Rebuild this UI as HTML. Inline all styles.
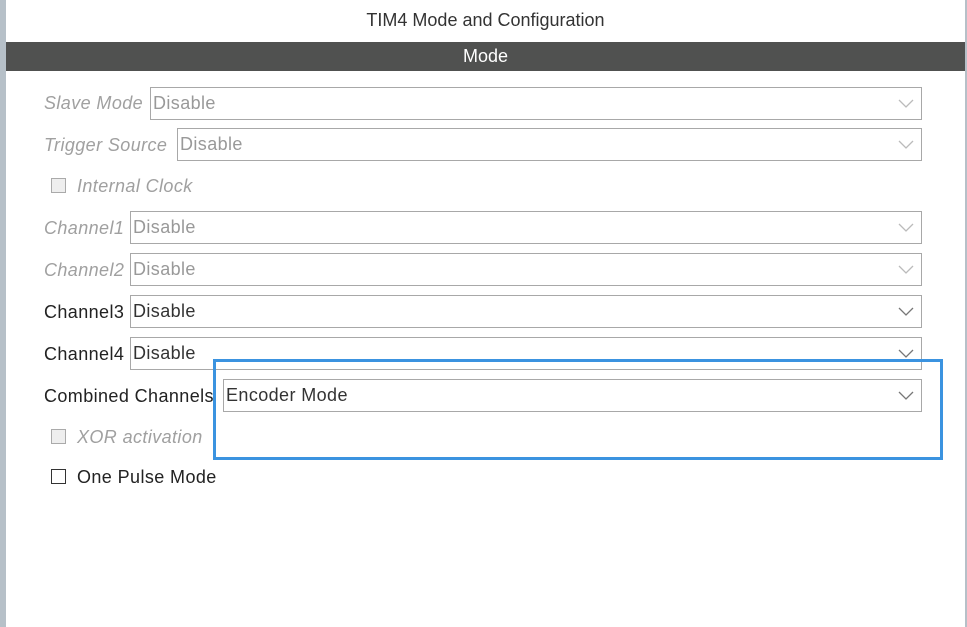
<!DOCTYPE html><html><head><style>
body{margin:0;width:967px;height:627px;background:#fff;position:relative;overflow:hidden;font-family:"Liberation Sans",Arial,sans-serif;font-size:18px;letter-spacing:0.4px}
.a{position:absolute}
.lb{position:absolute;left:44px;line-height:20px}
.dis{color:#a0a0a0;font-style:italic}
.dd{position:absolute;right:45px;height:31px;border:1px solid #a8a8a8;box-sizing:content-box;line-height:31px;padding-left:2px;color:#333}
.dd.g{color:#999}
.dd svg{position:absolute;right:7px;top:11px}
.cb{position:absolute;left:51px;width:15px;height:15px;border:1px solid #333;box-sizing:border-box}
.cb.g{border-color:#aaa;background:#eee}
</style></head><body>
<div class="a" style="left:0;top:0;width:6px;height:627px;background:#b6c0c8"></div>
<div class="a" style="left:965px;top:0;width:2px;height:627px;background:#b6c0c8"></div>
<div class="a" style="left:6px;top:10px;width:959px;text-align:center;color:#333;letter-spacing:0">TIM4 Mode and Configuration</div>
<div class="a" style="left:6px;top:42px;width:959px;height:29px;background:#505150;color:#fff;text-align:center;line-height:29px;letter-spacing:0">Mode</div>

<div class="lb dis" style="top:93px">Slave Mode</div>
<div class="dd g" style="left:150px;top:87px">Disable<svg width="16" height="9"><path d="M1 1l7 7 7-7" fill="none" stroke="#bbb" stroke-width="1.3"/></svg></div>
<div class="lb dis" style="top:135px">Trigger Source</div>
<div class="dd g" style="left:177px;top:128px">Disable<svg width="16" height="9"><path d="M1 1l7 7 7-7" fill="none" stroke="#bbb" stroke-width="1.3"/></svg></div>
<div class="cb g" style="top:178px"></div><div class="lb dis" style="left:77px;top:176px">Internal Clock</div>
<div class="lb dis" style="top:218px">Channel1</div>
<div class="dd g" style="left:130px;top:211px">Disable<svg width="16" height="9"><path d="M1 1l7 7 7-7" fill="none" stroke="#bbb" stroke-width="1.3"/></svg></div>
<div class="lb dis" style="top:260px">Channel2</div>
<div class="dd g" style="left:130px;top:253px">Disable<svg width="16" height="9"><path d="M1 1l7 7 7-7" fill="none" stroke="#bbb" stroke-width="1.3"/></svg></div>
<div class="lb" style="top:302px;color:#222">Channel3</div>
<div class="dd" style="left:130px;top:295px">Disable<svg width="16" height="9"><path d="M1 1l7 7 7-7" fill="none" stroke="#777" stroke-width="1.3"/></svg></div>
<div class="lb" style="top:344px;color:#222">Channel4</div>
<div class="dd" style="left:130px;top:337px">Disable<svg width="16" height="9"><path d="M1 1l7 7 7-7" fill="none" stroke="#777" stroke-width="1.3"/></svg></div>
<div class="lb" style="top:386px;color:#222">Combined Channels</div>
<div class="dd" style="left:223px;top:379px">Encoder Mode<svg width="16" height="9"><path d="M1 1l7 7 7-7" fill="none" stroke="#777" stroke-width="1.3"/></svg></div>
<div class="cb g" style="top:429px"></div><div class="lb dis" style="left:77px;top:427px">XOR activation</div>
<div class="cb" style="top:469px"></div><div class="lb" style="left:77px;top:467px;color:#222">One Pulse Mode</div>
<div class="a" style="left:213px;top:359px;width:730px;height:101px;border:3px solid #3b93e0;box-sizing:border-box"></div>
</body></html>
